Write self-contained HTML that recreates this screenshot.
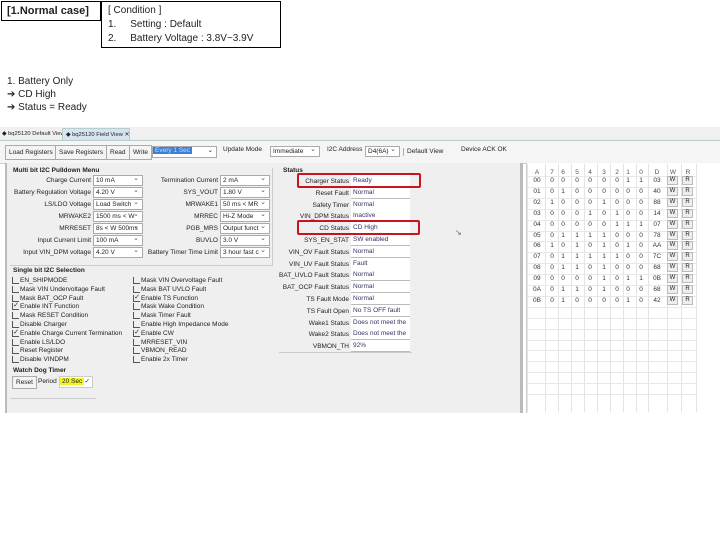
<!DOCTYPE html><html><head><meta charset="utf-8"><style>
*{margin:0;padding:0;box-sizing:border-box}
body{width:720px;height:540px;background:#fff;position:relative;overflow:hidden;font-family:"Liberation Sans",sans-serif;color:#222}
.a{position:absolute;white-space:nowrap}
.s{font-size:6.5px;line-height:8px}
.lb{text-align:right}
.cb{position:absolute;background:#fff;border:1px solid #aaa;height:11px;font-size:6.5px;line-height:9px;padding-left:2px}
.cb:after{content:"⌄";position:absolute;right:3px;top:-2px;font-size:7px;color:#555}
.vb{position:absolute;background:#fff;border-bottom:1px solid #bbb;height:12px;font-size:6.5px;line-height:11px;padding-left:2px;color:#336}
.ck{position:absolute;width:7px;height:7px;border-left:1px solid #555;border-bottom:1px solid #555;font-size:7px;line-height:6px;text-align:center}
.btn{position:absolute;border:1px solid #aaa;background:#f4f4f4;font-size:6.5px;line-height:13px;padding:0 3px;height:15px}
.rc{position:absolute;font-size:6.5px;text-align:center;width:10px;color:#333}
.wr{position:absolute;width:11px;height:9px;border:1px solid #bbb;background:#eee;font-size:6px;line-height:7px;text-align:center}
</style></head><body>
<div class="a" style="left:1px;top:1px;width:100px;height:20px;border:1px solid #000;font-weight:bold;font-size:11px;line-height:18px;padding-left:5px">[1.Normal case]</div>
<div class="a" style="left:101px;top:1px;width:180px;height:47px;border:1px solid #000;font-size:10px;line-height:14px;padding:2px 0 0 6px">[ Condition ]<br>1.&nbsp;&nbsp;&nbsp;&nbsp;&nbsp;Setting : Default<br>2.&nbsp;&nbsp;&nbsp;&nbsp;&nbsp;Battery Voltage : 3.8V~3.9V</div>
<div class="a" style="left:7px;top:75px;font-size:10px;line-height:13px">1. Battery Only<br>➔ CD High<br>➔ Status = Ready</div>

<div class="a" style="left:0;top:127px;width:720px;height:14px;background:#f0f0f0;border-bottom:1px solid #bcc"></div>
<div class="a" style="left:2px;top:130px;font-size:5.8px;line-height:8px">◆ bq25120 Default View</div>
<div class="a" style="left:62px;top:128px;width:68px;height:13px;background:#d6e4f2;border:1px solid #bcc;padding:2px 0 0 3px;font-size:5.8px;line-height:8px">◆ bq25120 Field View ✕</div>
<div class="a" style="left:0;top:141px;width:720px;height:23px;background:#f5f5f5;border-bottom:1px solid #ccc"></div>
<div class="btn" style="left:5px;top:145px">Load Registers</div>
<div class="btn" style="left:55px;top:145px">Save Registers</div>
<div class="btn" style="left:106px;top:145px">Read</div>
<div class="btn" style="left:129px;top:145px">Write</div>
<div class="a s" style="left:152px;top:146px;width:65px;height:12px;background:#fff;border:1px solid #aaa"><span style="background:#3b7fd6;color:#cde;padding:0 2px">Every 1 Sec</span><span style="position:absolute;right:3px">⌄</span></div>
<div class="a s" style="left:223px;top:146px">Update Mode</div>
<div class="cb" style="left:270px;top:146px;width:50px">Immediate</div>
<div class="a s" style="left:327px;top:146px">I2C Address</div>
<div class="cb" style="left:365px;top:146px;width:35px">D4(6A)</div>
<div class="a s" style="left:403px;top:148px;border-left:1px solid #aaa;padding-left:3px">Default View</div>
<div class="a s" style="left:461px;top:146px">Device ACK OK</div>

<div class="a" style="left:5px;top:163px;width:518px;height:250px;background:#efefef;border-left:2px solid #bbb;border-right:3px solid #bbb"></div>
<div class="a" style="left:10px;top:168px;width:263px;height:98px;border-right:1px solid #ccc;border-bottom:1px solid #ccc"></div>
<div class="a s" style="left:13px;top:167px;font-weight:bold">Multi bit I2C Pulldown Menu</div>
<div class="a" style="left:279px;top:168px;width:133px;height:185px;border-bottom:1px solid #ccc"></div>
<div class="a s" style="left:283px;top:167px;font-weight:bold">Status</div>

<div id="l"></div>

<div class="a" style="left:297px;top:173px;width:124px;height:15px;border:2px solid #c8141e;border-radius:2px"></div>
<div class="a" style="left:297px;top:220px;width:123px;height:15px;border:2px solid #c8141e;border-radius:2px"></div>
<div class="a" style="left:455px;top:228px;font-size:8px;color:#666">↘</div>

<div class="a s" style="left:13px;top:267px;font-weight:bold">Single bit I2C Selection</div>
<div class="a" style="left:10px;top:368px;width:86px;height:31px;border-bottom:1px solid #ccc"></div>
<div class="a s" style="left:13px;top:367px;font-weight:bold">Watch Dog Timer</div>
<div class="btn" style="left:12px;top:376px;height:13px;line-height:11px">Reset</div>
<div class="a s" style="left:38px;top:378px">Period</div>
<div class="a s" style="left:59px;top:376px;width:34px;height:12px;background:#fff;border:1px solid #ccc"><span style="background:#f3f32a;padding:0 2px;line-height:10px">20 Sec</span><span style="position:absolute;right:2px;top:1px">✓</span></div>

<div class="a" style="left:526px;top:163px;width:194px;height:250px;background:#fff;border-left:1px solid #ccc"></div>
<div id="r"></div>
<script>
let h='';
const L=[["Charge Current","10 mA"],["Battery Regulation Voltage","4.20 V"],["LS/LDO Voltage","Load Switch"],["MRWAKE2","1500 ms < W"],["MRRESET","8s < W 500ms"],["Input Current Limit","100 mA"],["Input VIN_DPM voltage","4.20 V"]];
const R=[["Termination Current","2 mA"],["SYS_VOUT","1.80 V"],["MRWAKE1","50 ms < MR"],["MRREC","Hi-Z Mode"],["PGB_MRS","Output funct"],["BUVLO","3.0 V"],["Battery Timer Time Limit","3 hour fast c"]];
L.forEach((e,i)=>{let y=175+i*12;h+=`<div class="a s lb" style="left:0;width:91px;top:${y+2}px">${e[0]}</div><div class="cb" style="left:93px;top:${y}px;width:50px">${e[1]}</div>`;});
R.forEach((e,i)=>{let y=175+i*12;h+=`<div class="a s lb" style="left:120px;width:98px;top:${y+2}px">${e[0]}</div><div class="cb" style="left:220px;top:${y}px;width:50px">${e[1]}</div>`;});
const S=[["Charger Status","Ready"],["Reset Fault","Normal"],["Safety Timer","Normal"],["VIN_DPM Status","Inactive"],["CD Status","CD High"],["SYS_EN_STAT","SW enabled"],["VIN_OV Fault Status","Normal"],["VIN_UV Fault Status","Fault"],["BAT_UVLO Fault Status","Normal"],["BAT_OCP Fault Status","Normal"],["TS Fault Mode","Normal"],["TS Fault Open","No TS OFF fault"],["Wake1 Status","Does not meet the"],["Wake2 Status","Does not meet the"],["VBMON_TH","92%"]];
S.forEach((e,i)=>{let y=175+i*11.8;h+=`<div class="a s lb" style="left:250px;width:99px;top:${y+3}px">${e[0]}</div><div class="vb" style="left:351px;top:${y}px;width:59px">${e[1]}</div>`;});
const C1=[["EN_SHIPMODE",0],["Mask VIN Undervoltage Fault",0],["Mask BAT_OCP Fault",0],["Enable INT Function",1],["Mask RESET Condition",0],["Disable Charger",0],["Enable Charge Current Termination",1],["Enable LS/LDO",0],["Reset Register",0],["Disable VINDPM",0]];
const C2=[["Mask VIN Overvoltage Fault",0],["Mask BAT UVLO Fault",0],["Enable TS Function",1],["Mask Wake Condition",0],["Mask Timer Fault",0],["Enable High Impedance Mode",0],["Enable CW",1],["MRRESET_VIN",0],["VBMON_READ",0],["Enable 2x Timer",0]];
[[C1,12],[C2,133]].forEach(([c,x])=>c.forEach((e,i)=>{let y=277+i*8.8;h+=`<div class="ck" style="left:${x}px;top:${y}px">${e[1]?'✓':''}</div><div class="a s" style="left:${x+8}px;top:${y}px">${e[0]}</div>`;}));
document.getElementById('l').outerHTML=h;
let r='';
const cx=[537,552,563,577,590,604,617,628,641,657,673,688];
"A 7 6 5 4 3 2 1 0 D W R".split(' ').forEach((t,i)=>r+=`<div class="rc" style="left:${cx[i]-5}px;top:169px;color:#555">${t}</div>`);
const D=["00000011","01000000","10001000","00010100","00000111","01111000","10101010","01111100","01101000","00001011","01101000","01000010"];
const HX=["03","40","88","14","07","78","AA","7C","68","0B","68","42"];
const V=[527,545,558,571,584,597,610,623,636,648,667,681,696];
V.forEach(x=>r+=`<div class="a" style="left:${x}px;top:164px;width:1px;height:248px;background:#e4e4e4"></div>`);
for(let i=0;i<21;i++)r+=`<div class="a" style="left:527px;top:${176+i*10.9}px;width:170px;height:1px;background:#e8e8e8"></div>`;
D.forEach((b,i)=>{let y=177+i*10.9;r+=`<div class="rc" style="left:${cx[0]-5}px;top:${y}px">${i.toString(16).toUpperCase().padStart(2,'0')}</div>`;
b.split('').forEach((v,j)=>r+=`<div class="rc" style="left:${cx[j+1]-5}px;top:${y}px">${v}</div>`);
r+=`<div class="rc" style="left:${cx[9]-5}px;top:${y}px">${HX[i]}</div><div class="wr" style="left:667px;top:${y-1}px">W</div><div class="wr" style="left:682px;top:${y-1}px">R</div>`;});
document.getElementById('r').outerHTML=r;
</script>
</body></html>
